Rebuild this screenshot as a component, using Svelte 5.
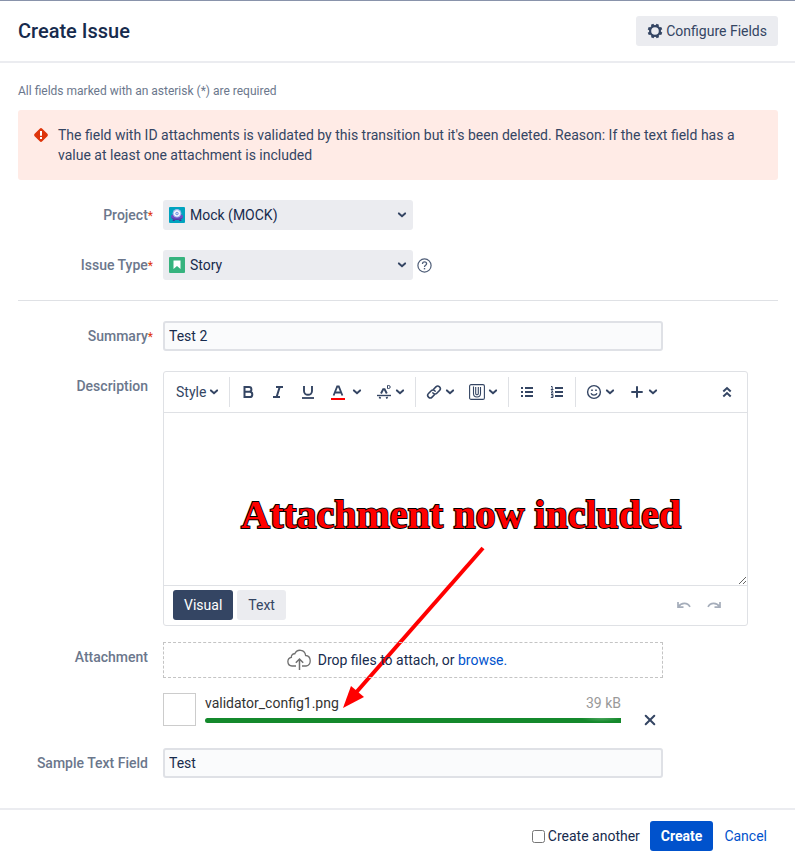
<script>
    let project = $state("Mock (MOCK)");
    let issueType = $state("Story");
    let summary = $state("Test 2");
    let description = $state("");
    let sampleText = $state("Test");
    let createAnother = $state(false);
    let mode = $state("Visual");
    let files = $state([{ name: "validator_config1.png", size: "39 kB", progress: 100 }]);
</script>

{#snippet chevron()}
    <svg class="chevron" width="10" height="8" viewBox="0 0 10 8" aria-hidden="true"><path d="M1.9 2.4 5 5.200 8.100 2.400" /></svg>
{/snippet}

<main>
    <header>
        <h1>Create Issue</h1>
        <button class="btn configure">
            <svg width="16" height="16" viewBox="0 0 16 16" aria-hidden="true">
                <circle cx="8" cy="8" r="4.900" fill="none" stroke="currentColor" stroke-width="2.200" />
                <g fill="currentColor">
                    {#each [22, 67, 112, 157, 202, 247, 292, 337] as angle}
                        <path d="M6.300 3 6.700 .7h2.600L9.700 3z" transform="rotate({angle} 8 8)" />
                    {/each}
                </g>
            </svg>
            Configure Fields
        </button>
    </header>

    <form id="issue" onsubmit={(e) => e.preventDefault()}>
        <p class="hint">All fields marked with an asterisk (*) are required</p>

        <div class="error" role="alert">
            <svg width="16" height="16" viewBox="0 0 16 16" aria-hidden="true">
                <rect x="2.600" y="2.600" width="10.800" height="10.800" rx="1.800" fill="#de350b" transform="rotate(45 8 8)" />
                <path d="M8 4.100v4.700M8 10.100v2" stroke="#fff" stroke-width="2" />
            </svg>
            <p>The field with ID attachments is validated by this transition but it's been deleted. Reason: If the text field has a value at least one attachment is included</p>
        </div>

        <div class="row">
            <label for="project">Project<span class="star">*</span></label>
            <div class="select">
                <svg class="avatar" width="16" height="16" viewBox="0 0 16 16" aria-hidden="true">
                    <rect width="16" height="16" rx="1" fill="#00a3bf" />
                    <path d="M4.500 11 3.500 14h2l1-2M11.500 11l1 3h-2l-1-2" fill="#403294" />
                    <path d="M2 9.500C2 7.500 5 7 8 7s6 .5 6 2.500-2.500 3.500-6 3.500-6-1.500-6-3.500z" fill="#6b4fc4" />
                    <path d="M2.200 10.300c2 2 9.600 2 11.600 0-.6 3.500-11 3.500-11.600 0z" fill="#5238a5" />
                    <circle cx="8" cy="6.300" r="4.300" fill="#a9b8ee" />
                    <circle cx="8" cy="6.400" r="2.700" fill="#dfe6fb" stroke="#fff" />
                    <circle cx="8" cy="6.600" r="1.200" fill="none" stroke="#5b82d8" stroke-width=".8" />
                </svg>
                <select id="project" bind:value={project}>
                    <option>Mock (MOCK)</option>
                </select>
                {@render chevron()}
            </div>
        </div>

        <div class="row">
            <label for="type">Issue Type<span class="star">*</span></label>
            <div class="with-help">
                <div class="select">
                    <svg class="avatar" width="16" height="16" viewBox="0 0 16 16" aria-hidden="true">
                        <rect width="16" height="16" rx="1" fill="#36b37e" />
                        <path d="M4.500 3.500h7V12L8 9l-3.500 3z" fill="#fff" />
                    </svg>
                    <select id="type" bind:value={issueType}>
                        <option>Story</option>
                    </select>
                    {@render chevron()}
                </div>
                <a class="help" href="#help" aria-label="Help">
                    <svg width="15" height="15" viewBox="0 0 15 15" fill="none" stroke="#505f79" aria-hidden="true">
                        <circle cx="7.500" cy="7.500" r="6.600" stroke-width="1.200" />
                        <path d="M5.500 5.900c0-2.800 4.100-2.600 4.100-.2 0 1.600-2.100 1.500-2.100 3.200" stroke-width="1.300" />
                        <path d="M7.500 10v1.400" stroke-width="1.400" />
                    </svg>
                </a>
            </div>
        </div>

        <hr>

        <div class="row">
            <label for="summary">Summary<span class="star">*</span></label>
            <input class="text" type="text" id="summary" bind:value={summary}>
        </div>

        <div class="row">
            <label for="description">Description</label>
            <div class="editor">
                <div class="toolbar">
                    <div class="group">
                        <button class="tool style">Style {@render chevron()}</button>
                    </div>
                    <div class="group">
                        <button class="tool" aria-label="Bold">
                            <svg width="16" height="16" viewBox="0 0 16 16"><path d="M4.500 3h4.500a2.400 2.400 0 0 1 0 4.800H4.500zM4.500 7.800h5.200a2.600 2.600 0 0 1 0 5.200H4.500z" stroke-width="2" /></svg>
                        </button>
                        <button class="tool" aria-label="Italic">
                            <svg width="16" height="16" viewBox="0 0 16 16"><path d="M6 3h7M3 13h7M9.700 3 6.600 13" stroke-width="2" /></svg>
                        </button>
                        <button class="tool" aria-label="Underline">
                            <svg width="16" height="16" viewBox="0 0 16 16"><path d="M4 2v5a4 3.800 0 0 0 8 0V2" stroke-width="1.900" /><path d="M2 14h12" stroke-width="1.800" /></svg>
                        </button>
                        <button class="tool color" aria-label="Text colour">
                            <svg width="16" height="16" viewBox="0 0 16 16"><path d="m3.600 11.500 3.600-9h1.600l3.600 9M5.200 8.500h5.600" stroke-width="1.800" /><path d="M1 15h14" stroke="#f00" stroke-width="2" /></svg>
                            {@render chevron()}
                        </button>
                        <button class="tool drop" aria-label="More formatting">
                            <svg width="16" height="16" viewBox="0 0 16 16"><path d="M1 11.500h14" stroke-width="1.400" /><path d="m5 9.500 2.200-4.200h1.400l2.200 4.200M3.500 14.500l.8-1.500M10.500 13l.8 1.500" stroke-width="1.900" /><path d="M11.500 1.500h1.200a1.300 1.300 0 0 1 0 3h-1.200z" stroke-width="1" /></svg>
                            {@render chevron()}
                        </button>
                    </div>
                    <div class="group">
                        <button class="tool drop" aria-label="Link">
                            <svg width="16" height="16" viewBox="0 0 16 16" stroke-width="1.600" stroke-linecap="round"><path d="m7.600 5.200 2.300-2.300a2.500 2.500 0 0 1 3.600 3.600L10.800 9.200a2.500 2.500 0 0 1-3.900-.3" /><path d="m8.400 10.800-2.300 2.300a2.500 2.500 0 0 1-3.600-3.600l2.700-2.700a2.500 2.500 0 0 1 3.900.3" /></svg>
                            {@render chevron()}
                        </button>
                        <button class="tool drop" aria-label="Attach">
                            <svg width="16" height="16" viewBox="0 0 16 16"><rect x=".6" y=".6" width="14.800" height="14.800" rx="1.500" stroke-width="1.100" /><path d="M4.500 2.500v7a3.500 3.500 0 0 0 7 0V3M9.300 3v6.500a1.300 1.300 0 0 1-2.600 0V3" stroke-width="1.100" /></svg>
                            {@render chevron()}
                        </button>
                    </div>
                    <div class="group">
                        <button class="tool" aria-label="Bullet list">
                            <svg width="16" height="16" viewBox="0 0 16 16" stroke-width="2"><path d="M2 4h2M2 8h2M2 12h2M6 4h8M6 8h8M6 12h8" /></svg>
                        </button>
                        <button class="tool" aria-label="Numbered list">
                            <svg width="16" height="16" viewBox="0 0 16 16"><path d="M6 4h8M6 8h8M6 12h8" stroke-width="2" /><path d="M2 2.500h1.200V5.500M1.800 5.500h2.700M2 7h2L2.200 9H4.500M2 10.500h2v3H1.800M2.300 12H4" stroke-width="1" /></svg>
                        </button>
                    </div>
                    <div class="group last">
                        <button class="tool drop" aria-label="Emoji">
                            <svg width="16" height="16" viewBox="0 0 16 16"><circle cx="8" cy="8" r="6.400" stroke-width="1.400" /><path d="M5 9.300c1 2.400 5 2.400 6 0" stroke-width="1.300" /><path d="M5.200 6.300h1.600M9.200 6.300h1.600" stroke-width="1.600" /></svg>
                            {@render chevron()}
                        </button>
                        <button class="tool drop" aria-label="Insert">
                            <svg width="16" height="16" viewBox="0 0 16 16"><path d="M8 2.300v11.400M2.300 8h11.400" stroke-width="2" /></svg>
                            {@render chevron()}
                        </button>
                    </div>
                    <button class="tool collapse" aria-label="Collapse toolbar">
                        <svg width="16" height="16" viewBox="0 0 16 16" stroke-width="2"><path d="M4.300 7.400 8 4l3.700 3.400M4.300 12.400 8 9l3.700 3.400" /></svg>
                    </button>
                </div>
                <textarea id="description" bind:value={description}></textarea>
                <div class="modes">
                    {#each ["Visual", "Text"] as name}
                        <button class="btn" class:active={mode === name} onclick={() => (mode = name)}>{name}</button>
                    {/each}
                    <span class="history">
                        <button class="tool" aria-label="Undo" disabled>
                            <svg width="16" height="16" viewBox="0 0 16 16" stroke-width="1.700"><path d="M2 5v5.200h5.500M2.500 9.500C5.200 5.500 11.500 5 14 9.800" /></svg>
                        </button>
                        <button class="tool" aria-label="Redo" disabled>
                            <svg width="16" height="16" viewBox="0 0 16 16" stroke-width="1.700"><path d="M14 5v5.200H8.500M13.500 9.500C10.800 5.500 4.500 5 2 9.800" /></svg>
                        </button>
                    </span>
                </div>

                <!-- note drawn on top of the editor, pointing at the uploaded file -->
                <svg class="note" width="585" height="345" viewBox="0 0 585 345">
                    <text x="78" y="157">Attachment now included</text>
                    <path d="M320 177 190 325" stroke="#f00" stroke-width="4" />
                    <path d="m180 337 8-22 13 11z" fill="#f00" />
                </svg>
            </div>
        </div>

        <div class="row attachment">
            <label for="file">Attachment</label>
            <div class="uploads">
                <div class="drop-zone">
                    <svg width="24" height="22" viewBox="0 0 24 22" fill="none" stroke="#707070" stroke-width="1.300" aria-hidden="true">
                        <path d="M9 17H5a4.400 4.400 0 0 1-.6-8.700 3 3 0 0 1 3.400-3.500C10-.4 18 .2 18.600 6.500c5.800.3 6.300 9.500.4 10.500h-4" />
                        <path d="M12.500 21V10.200M8.800 13.800l3.700-3.800 3.700 3.800" stroke-width="1.500" />
                    </svg>
                    <span>Drop files to attach, or <a href="#browse">browse.</a></span>
                    <input class="hidden-file" type="file" id="file" tabindex="-1">
                </div>
                {#each files as file, i}
                    <div class="file">
                        <span class="thumb"></span>
                        <div class="info">
                            <div class="names"><span>{file.name}</span><span class="size">{file.size}</span></div>
                            <div class="bar"><div class="done" style="width: {file.progress}%"></div></div>
                        </div>
                        <button class="remove" aria-label="Remove file" onclick={() => files.splice(i, 1)}>
                            <svg width="12" height="12" viewBox="0 0 12 12" fill="none" stroke="currentColor" stroke-width="2" stroke-linecap="round"><path d="m1.700 1.700 8.600 8.600m0-8.600-8.600 8.600" /></svg>
                        </button>
                    </div>
                {/each}
            </div>
        </div>

        <div class="row">
            <label for="sample">Sample Text Field</label>
            <input class="text" type="text" id="sample" bind:value={sampleText}>
        </div>
    </form>

    <footer>
        <label class="another"><input type="checkbox" bind:checked={createAnother}>Create another</label>
        <button class="btn primary" form="issue">Create</button>
        <a href="#cancel">Cancel</a>
    </footer>
</main>

<style>
    :global(body) {
        background: #fff;
    }
    main {
        border-top: 1px solid #8993ab;
        font-family: Roboto, sans-serif;
        font-size: 14px;
        line-height: 20px;
        color: #172b4d;
    }
    header {
        display: flex;
        align-items: center;
        justify-content: space-between;
        padding: 15px 17px 15px 18px;
        border-bottom: 2px solid #ebecf0;
    }
    h1 {
        margin: 0;
        font-size: 20px;
        font-weight: 500;
        line-height: 30px;
    }
    p {
        margin: 0;
    }
    a {
        color: #0052cc;
        text-decoration: none;
    }
    button {
        font: inherit;
        border: 0;
        cursor: pointer;
    }
    .btn {
        height: 30px;
        padding: 0 11px;
        border-radius: 3px;
        background: #ebecf0;
        color: #344563;
    }
    .btn.active {
        background: #344563;
        color: #fff;
    }
    .btn.primary {
        background: #0052cc;
        color: #fff;
        font-weight: 700;
    }
    .configure {
        display: flex;
        align-items: center;
        gap: 3px;
    }
    form {
        padding: 20px 17px 30px 18px;
    }
    .hint {
        font-size: 12px;
        line-height: 16px;
        color: #6b778c;
    }
    .error {
        display: flex;
        gap: 9px;
        margin-top: 11px;
        padding: 15px;
        border-radius: 3px;
        background: #ffebe6;
        color: #344563;
    }
    .error svg {
        flex: none;
        margin-top: 2px;
    }
    .row {
        display: grid;
        grid-template-columns: 130px minmax(0, 1fr);
        gap: 15px;
        margin-top: 20px;
    }
    .row label {
        padding-top: 5px;
        text-align: right;
        font-weight: 500;
        color: #6b778c;
    }
    .star {
        margin-right: -5px;
        color: #de350b;
        font-size: 12px;
        font-weight: 400;
    }
    hr {
        height: 1px;
        margin: 20px 0 0;
        border: 0;
        background: #dfe1e5;
    }
    .select {
        position: relative;
        width: 250px;
    }
    .select select {
        display: block;
        width: 100%;
        height: 30px;
        padding: 0 27px;
        border: 0;
        border-radius: 3px;
        background: #ebecf0;
        color: #172b4d;
        font: inherit;
        appearance: none;
    }
    .avatar {
        position: absolute;
        left: 6px;
        top: 7px;
    }
    .select .chevron {
        position: absolute;
        right: 6px;
        top: 11px;
    }
    .chevron {
        flex: none;
        fill: none;
        stroke: #344563;
        stroke-width: 2;
        stroke-linecap: round;
    }
    .with-help {
        display: flex;
        align-items: center;
        gap: 4px;
    }
    .help {
        display: flex;
    }
    .text {
        box-sizing: border-box;
        width: 100%;
        max-width: 500px;
        height: 30px;
        padding: 0 4px;
        border: 2px solid #dfe1e6;
        border-radius: 3px;
        background: #fafbfc;
        color: #172b4d;
        font: inherit;
    }
    .editor {
        position: relative;
        box-sizing: border-box;
        width: 100%;
        max-width: 585px;
        border: 1px solid #dfe1e5;
        border-radius: 3px;
    }
    .toolbar {
        display: flex;
        align-items: center;
        height: 40px;
        border-bottom: 1px solid #dfe1e5;
    }
    .group {
        display: flex;
        padding: 0 3px;
        border-right: 1px solid #dfe1e5;
    }
    .group.last {
        border-right: 0;
    }
    .tool {
        display: flex;
        align-items: center;
        width: 30px;
        height: 30px;
        padding: 0 7px;
        background: none;
        color: #344563;
    }
    .tool svg {
        flex: none;
        fill: none;
        stroke: currentColor;
    }
    .tool:disabled {
        color: #a5adba;
    }
    .tool.style {
        width: 59px;
        padding: 0 9px;
        gap: 3px;
    }
    .tool.drop {
        width: 43px;
        gap: 3px;
    }
    .tool.color {
        width: 46px;
        gap: 6px;
    }
    .collapse {
        margin-left: auto;
        margin-right: 5px;
    }
    textarea {
        display: block;
        box-sizing: border-box;
        width: 100%;
        height: 172px;
        padding: 10px;
        border: 0;
        outline: 0;
        background: none;
        color: inherit;
        font: inherit;
        resize: vertical;
    }
    .modes {
        display: flex;
        gap: 4px;
        padding: 4px 18px 5px 9px;
        border-top: 1px solid #dfe1e5;
    }
    .history {
        display: flex;
        margin-left: auto;
    }
    .note {
        position: absolute;
        left: -1px;
        top: -1px;
        pointer-events: none;
    }
    .note text {
        fill: #f00;
        stroke: #000;
        stroke-width: 2px;
        paint-order: stroke;
        font: bold 40px "Liberation Serif", serif;
    }
    .attachment {
        margin-top: 16px;
    }
    .uploads {
        max-width: 500px;
        padding-bottom: 2px;
    }
    .drop-zone {
        position: relative;
        display: flex;
        align-items: center;
        justify-content: center;
        gap: 7px;
        height: 34px;
        padding-right: 32px;
        border: 1px dashed #c4c4c4;
    }
    .hidden-file {
        position: absolute;
        inset: 0;
        width: 100%;
        opacity: 0;
        pointer-events: none;
    }
    .file {
        display: flex;
        margin-top: 15px;
    }
    .thumb {
        flex: none;
        box-sizing: border-box;
        width: 33px;
        height: 33px;
        border: 1px solid #ccc;
    }
    .info {
        flex: 1;
        margin: 0 23px 0 9px;
    }
    .names {
        display: flex;
        justify-content: space-between;
        color: #333;
    }
    .size {
        color: #999;
    }
    .bar {
        height: 5px;
        margin-top: 5px;
        border-radius: 3px 0 0 3px;
        overflow: hidden;
    }
    .done {
        height: 100%;
        background: radial-gradient(20px 4px at calc(100% - 20px) 0, #4aa55c, #14892c);
    }
    .remove {
        display: flex;
        align-self: flex-end;
        margin-right: 7px;
        padding: 0;
        background: none;
        color: #344563;
    }
    footer {
        display: flex;
        align-items: center;
        justify-content: flex-end;
        padding: 11px 28px 8px 18px;
        border-top: 2px solid #ebecf0;
    }
    .another {
        display: flex;
        align-items: center;
        gap: 3px;
        margin-right: 10px;
    }
    .another input {
        margin: 0;
    }
    footer a {
        margin-left: 11px;
    }
</style>
